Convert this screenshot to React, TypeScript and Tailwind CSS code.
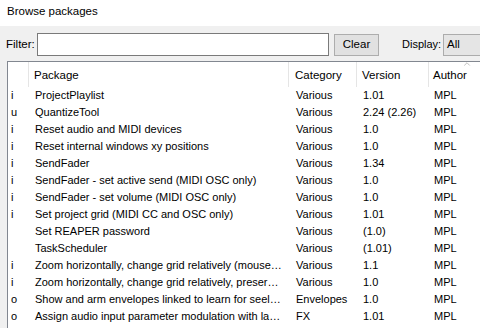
import { ChevronUp } from "lucide-react";

const ROWS: { flag: string; name: string; cat: string; ver: string; author: string }[] = [
  { flag: "i", name: "ProjectPlaylist", cat: "Various", ver: "1.01", author: "MPL" },
  { flag: "u", name: "QuantizeTool", cat: "Various", ver: "2.24 (2.26)", author: "MPL" },
  { flag: "i", name: "Reset audio and MIDI devices", cat: "Various", ver: "1.0", author: "MPL" },
  { flag: "i", name: "Reset internal windows xy positions", cat: "Various", ver: "1.0", author: "MPL" },
  { flag: "i", name: "SendFader", cat: "Various", ver: "1.34", author: "MPL" },
  { flag: "i", name: "SendFader - set active send (MIDI OSC only)", cat: "Various", ver: "1.0", author: "MPL" },
  { flag: "i", name: "SendFader - set volume (MIDI OSC only)", cat: "Various", ver: "1.0", author: "MPL" },
  { flag: "i", name: "Set project grid (MIDI CC and OSC only)", cat: "Various", ver: "1.01", author: "MPL" },
  { flag: "", name: "Set REAPER password", cat: "Various", ver: "(1.0)", author: "MPL" },
  { flag: "", name: "TaskScheduler", cat: "Various", ver: "(1.01)", author: "MPL" },
  { flag: "i", name: "Zoom horizontally, change grid relatively (mousewheel)", cat: "Various", ver: "1.1", author: "MPL" },
  { flag: "i", name: "Zoom horizontally, change grid relatively, preserve grid", cat: "Various", ver: "1.0", author: "MPL" },
  { flag: "o", name: "Show and arm envelopes linked to learn for seelcted FX", cat: "Envelopes", ver: "1.0", author: "MPL" },
  { flag: "o", name: "Assign audio input parameter modulation with last touched", cat: "FX", ver: "1.01", author: "MPL" },
  { flag: "", name: "Delete all MIDI OSC learn from focused FX", cat: "FX", ver: "1.01", author: "MPL" },
];

const COLS = "grid grid-cols-[21px_260px_68px_72px_1fr]";

export default function App() {
  return (
    <div className="w-[480px] h-[328px] overflow-hidden bg-[#f0f0f0] text-black font-['Liberation_Sans',Arial,sans-serif] text-[11.5px] flex flex-col">
      {/* Title bar */}
      <div className="h-[26px] shrink-0 bg-white flex items-center pl-[7px] pb-[2px]">Browse packages</div>

      {/* Filter row */}
      <div className="h-[35px] shrink-0 flex items-center pt-[2px]">
        <span className="ml-[6px] w-[31px]">Filter:</span>
        <div className="w-[292px] h-[23px] border border-[#7a7a7a] bg-white" />
        <button className="ml-[5px] w-[45px] h-[22px] border border-[#adadad] bg-[#e1e1e1] leading-none">Clear</button>
        <span className="ml-[23px] w-[41px] text-[11px]">Display:</span>
        <div className="flex-1 h-[22px] border border-[#acacac] border-r-0 bg-[#e5e5e5] flex items-center pl-[3px]">All</div>
      </div>

      {/* List */}
      <div className="ml-[7px] flex-1 border-l border-t border-[#828790] bg-white overflow-hidden text-[11px]">
        <div className={`${COLS} h-[25px] relative text-[11.5px]`}>
          <div className="border-r border-[#e5e5e5]" />
          <div className="border-r border-[#e5e5e5] flex items-center pl-[5px] pt-[2px]">Package</div>
          <div className="border-r border-[#e5e5e5] flex items-center pl-[6px] pt-[2px]">Category</div>
          <div className="border-r border-[#e5e5e5] flex items-center pl-[5px] pt-[2px]">Version</div>
          <div className="flex items-center pl-[4px] pt-[2px]">Author</div>
          <ChevronUp className="absolute left-[454px] top-[-3px] w-[10px] h-[10px] text-[#9a9a9a]" strokeWidth={1.5} />
        </div>
        {ROWS.map((r, i) => (
          <div key={i} className={`${COLS} h-[17px] items-center`}>
            <span className="pl-[3px]">{r.flag}</span>
            <span className="pl-[6px] pr-[5px] truncate min-w-0">{r.name}</span>
            <span className="pl-[7px] truncate min-w-0">{r.cat}</span>
            <span className="pl-[6px] truncate min-w-0">{r.ver}</span>
            <span className="pl-[5px]">{r.author}</span>
          </div>
        ))}
      </div>
    </div>
  );
}
